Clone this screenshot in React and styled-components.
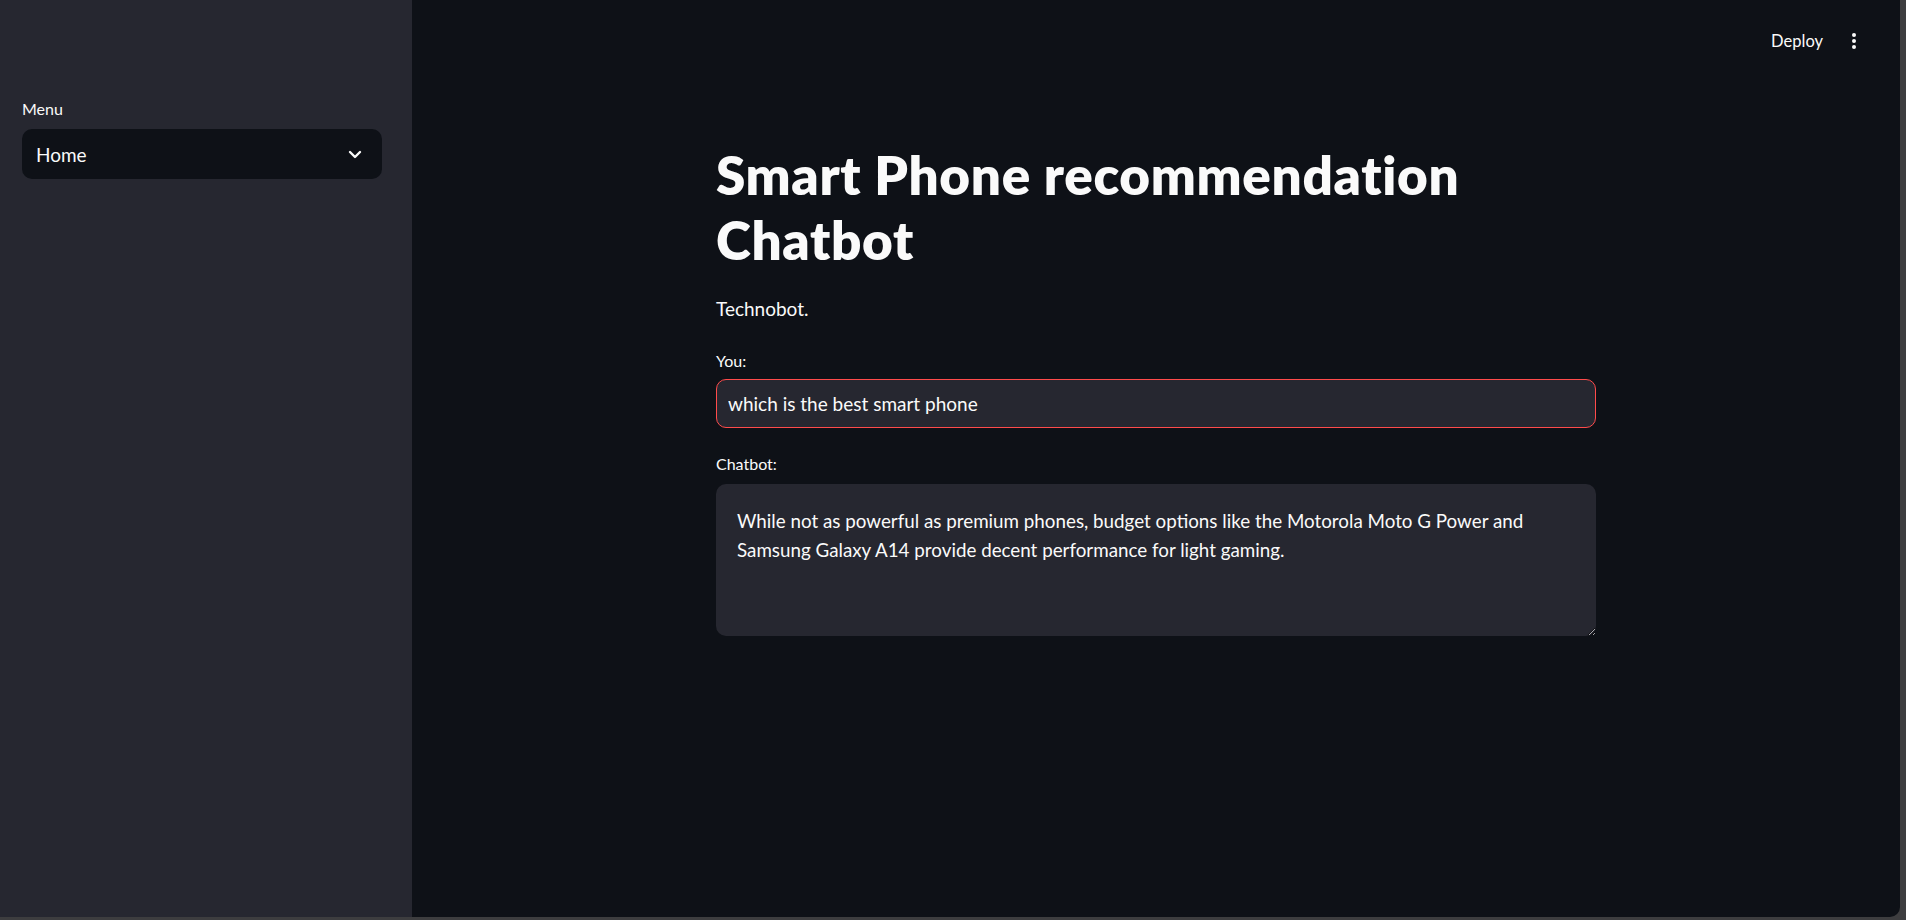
import React from "react";
import styled, { createGlobalStyle } from "styled-components";

const GlobalStyle = createGlobalStyle`
  html, body {
    margin: 0;
    padding: 0;
    background: #3d3d3f;
    overflow: hidden;
  }
  * {
    box-sizing: border-box;
  }
`;

const FONT = `Lato, "Noto Sans", "Liberation Sans", sans-serif`;

const Window = styled.div`
  display: flex;
  width: 1900px;
  height: 917px;
  background: #0e1117;
  border-bottom-right-radius: 10px;
  overflow: hidden;
  font-family: ${FONT};
  color: #fafafa;
`;

const Sidebar = styled.aside`
  flex: 0 0 412px;
  background: #262730;
  padding: 99px 30px 0 22px;
`;

const Label = styled.div`
  font-size: 16px;
  line-height: 20px;
  color: #fafafa;
  margin-bottom: ${(p) => p.$gap || 8}px;
`;

const Select = styled.div`
  display: flex;
  align-items: center;
  justify-content: space-between;
  height: 50px;
  padding: 0 20px 0 14px;
  border-radius: 10px;
  background: #0e1117;
  font-size: 19px;
`;

const Main = styled.main`
  flex: 1;
  display: flex;
  flex-direction: column;
  min-width: 0;
`;

const Header = styled.header`
  height: 82px;
  display: flex;
  align-items: center;
  justify-content: flex-end;
  gap: 28px;
  padding: 0 43px 0 0;
`;

const DeployButton = styled.span`
  font-size: 16.5px;
  color: #fafafa;
`;

const Content = styled.section`
  width: 880px;
  margin: 0 auto;
  padding-top: 60px;
  display: flex;
  flex-direction: column;
`;

const Title = styled.h1`
  margin: 0;
  font-size: 53px;
  font-weight: 800;
  line-height: 65px;
  letter-spacing: 0.65px;
`;

const Caption = styled.p`
  margin: 22px 0 28px;
  font-size: 19px;
  line-height: 29px;
`;

const Field = styled.div`
  display: flex;
  flex-direction: column;
  margin-bottom: ${(p) => p.$gap || 0}px;
`;

const TextInput = styled.input`
  height: 49px;
  padding: 0 11px;
  border: 1px solid #ff4b4b;
  border-radius: 10px;
  background: #262730;
  color: #fafafa;
  font-family: ${FONT};
  font-size: 19px;
  outline: none;
`;

const TextArea = styled.textarea`
  height: 152px;
  padding: 22px 21px;
  border: none;
  border-radius: 10px;
  background: #262730;
  color: #fafafa;
  font-family: ${FONT};
  font-size: 18.8px;
  line-height: 29px;
  outline: none;
  resize: vertical;
`;

const Chevron = () => (
  <svg width="14" height="9" viewBox="0 0 14 9" fill="none">
    <path d="M2 2l5 5 5-5" stroke="#fafafa" strokeWidth="2.4" strokeLinecap="round" strokeLinejoin="round" />
  </svg>
);

const Kebab = () => (
  <svg width="6" height="18" viewBox="0 0 6 18" fill="#fafafa">
    <circle cx="3" cy="3" r="2" />
    <circle cx="3" cy="9" r="2" />
    <circle cx="3" cy="15" r="2" />
  </svg>
);

export default function App() {
  return (
    <>
      <GlobalStyle />
      <Window>
        <Sidebar>
          <Label $gap={10}>Menu</Label>
          <Select>
            <span>Home</span>
            <Chevron />
          </Select>
        </Sidebar>
        <Main>
          <Header>
            <DeployButton>Deploy</DeployButton>
            <Kebab />
          </Header>
          <Content>
            <Title>
              Smart Phone recommendation
              <br />
              Chatbot
            </Title>
            <Caption>Technobot.</Caption>
            <Field $gap={26}>
              <Label>You:</Label>
              <TextInput readOnly defaultValue="which is the best smart phone" />
            </Field>
            <Field>
              <Label $gap={10}>Chatbot:</Label>
              <TextArea
                readOnly
                defaultValue="While not as powerful as premium phones, budget options like the Motorola Moto G Power and Samsung Galaxy A14 provide decent performance for light gaming."
              />
            </Field>
          </Content>
        </Main>
      </Window>
    </>
  );
}
